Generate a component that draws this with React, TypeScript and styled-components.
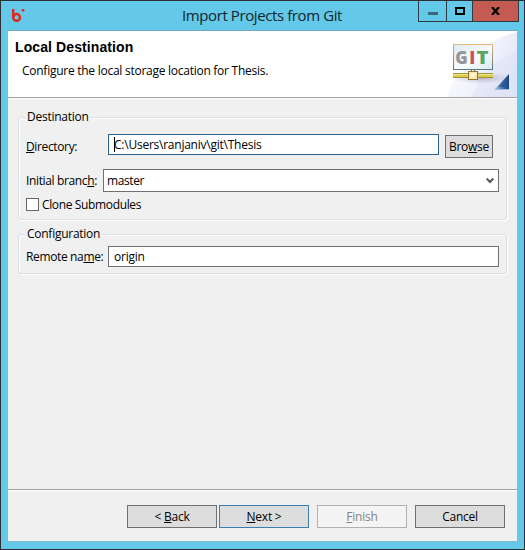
import React from "react";
import styled, { createGlobalStyle, css } from "styled-components";

const GlobalStyle = createGlobalStyle`
  * { box-sizing: border-box; }
  html, body { margin: 0; padding: 0; overflow: hidden; }
`;

const Window = styled.main`
  width: 525px;
  height: 550px;
  display: flex;
  flex-direction: column;
  border: 1px solid #2c3036;
  padding: 0 7px 7px;
  background: #64c8e8;
  font: 12px/16px "Open Sans", "Noto Sans", sans-serif;
  color: #000;
  cursor: default;
`;

const TitleBar = styled.header`
  height: 30px;
  flex: none;
  display: flex;
  align-items: flex-start;
  border-bottom: 1px solid #6fa9be;
`;

const AppLogo = styled.svg`
  width: 16px;
  height: 16px;
  flex: none;
  margin: 6px 0 0 2px;
`;

const WindowTitle = styled.h1`
  margin: 4px 0 0 156px;
  flex: 1;
  min-width: 0;
  font-size: 15px;
  line-height: 21px;
  font-weight: 400;
  letter-spacing: -0.4px;
  white-space: nowrap;
  color: #10252c;
`;

const Caption = styled.div`
  display: flex;
  flex: none;
  height: 21px;
  margin-right: -2px;
  border: solid #2c3a42;
  border-width: 0 1px 1px;
`;

const CaptionButton = styled.button<{ $width: number; $close?: boolean }>`
  width: ${(p) => p.$width}px;
  padding: 0;
  border: 0;
  display: flex;
  justify-content: center;
  align-items: center;
  background: ${(p) => (p.$close ? "#c35b52" : "transparent")};
  & + & { border-left: 1px solid #2c3a42; }
`;

const Client = styled.div`
  flex: 1;
  min-height: 0;
  display: flex;
  flex-direction: column;
  background: #f0f0f0;
  border-bottom: 1px solid #86bccb;
`;

const Banner = styled.section`
  height: 66px;
  flex: none;
  display: flex;
  justify-content: space-between;
  background: #fff;
`;

const BannerText = styled.div`
  padding: 8px 0 0 7px;
`;

const BannerTitle = styled.h2`
  margin: 0;
  font: bold 14px/17px "Liberation Sans", Arial, sans-serif;
  letter-spacing: 0.1px;
`;

const BannerDescription = styled.p`
  margin: 7px 0 0 7px;
  white-space: nowrap;
  letter-spacing: -0.26px;
`;

const GitArt = styled.svg`
  width: 75px;
  height: 66px;
`;

const Separator = styled.div`
  height: 2px;
  flex: none;
  background: #fff;
  border-top: 1px solid #a0a0a0;
`;

const Page = styled.div`
  flex: 1;
  padding: 10px 10px 0;
`;

const Group = styled.fieldset<{ $height: number }>`
  height: ${(p) => p.$height}px;
  min-width: 0;
  margin: 0 0 6px;
  padding: 0 7px;
  border: 1px solid #d5dfe5;
  border-radius: 3px;
  box-shadow: 1px 1px 0 #fff, inset 1px 1px 0 #fff;
`;

const Legend = styled.legend`
  height: 16px;
  padding: 0 2px;
  margin-left: -1px;
  background: #f0f0f0;
  letter-spacing: -0.26px;
`;

const Row = styled.div<{ $top: number; $height: number }>`
  display: flex;
  align-items: center;
  height: ${(p) => p.$height}px;
  margin-top: ${(p) => p.$top}px;
`;

const Label = styled.label<{ $width: number; $drop?: number }>`
  width: ${(p) => p.$width}px;
  padding-top: ${(p) => p.$drop ?? 0}px;
  flex: none;
  white-space: nowrap;
  letter-spacing: -0.36px;
`;

const Mnemonic = styled.span`
  text-decoration: underline;
  text-decoration-thickness: 1px;
  text-underline-offset: 1px;
  text-decoration-skip-ink: none;
`;

const Field = styled.div<{ $width: number; $focused?: boolean; $combo?: boolean }>`
  width: ${(p) => p.$width}px;
  height: ${(p) => (p.$combo ? 23 : 21)}px;
  display: flex;
  align-items: center;
  padding: 0 4px 0 ${(p) => (p.$combo ? 3 : 5)}px;
  border: 1px solid ${(p) => (p.$focused ? "#2b6390" : "#707070")};
  background: #fff;
  letter-spacing: -0.24px;
  ${(p) => p.$focused && css`align-self: flex-start; margin-top: 1px;`}
  ${(p) => p.$combo && css`
    justify-content: space-between;
    padding-top: 1px;
    letter-spacing: -0.4px;
  `}
`;

const Caret = styled.i`
  width: 1px;
  height: 15px;
  margin-right: -1px;
  background: #000;
`;

const CheckBox = styled.span`
  width: 13px;
  height: 13px;
  margin-right: 3px;
  border: 1px solid #666;
  background: #fff;
`;

const Button = styled.button<{ $width: number; $default?: boolean }>`
  width: ${(p) => p.$width}px;
  height: 23px;
  padding: 1px 0 0;
  flex: none;
  font: inherit;
  letter-spacing: -0.24px;
  color: #000;
  background: #dddddd;
  border: 1px solid ${(p) => (p.$default ? "#3c7fb1" : "#707070")};
  &:disabled {
    color: #838383;
    background: #f4f4f4;
    border-color: #adb2b5;
  }
`;

const BrowseButton = styled(Button)`
  align-self: flex-end;
  margin-left: 6px;
`;

const Footer = styled.footer`
  height: 50px;
  flex: none;
  display: flex;
  padding: 14px 12px 0 119px;
`;

const StepButtons = styled.div`
  display: flex;
  gap: 2px;
`;

const EndButtons = styled.div`
  display: flex;
  gap: 8px;
  margin-left: 8px;
`;

const BannerGraphic = () => (
  <GitArt viewBox="0 0 75 66" aria-hidden="true">
    <defs>
      <linearGradient id="swoosh" x1="0" y1="0" x2="1" y2="0.5">
        <stop offset="0" stopColor="#fff" />
        <stop offset="0.5" stopColor="#f5f6fd" />
        <stop offset="1" stopColor="#e2e6f8" />
      </linearGradient>
      <linearGradient id="panel" x1="0" y1="0" x2="1" y2="1">
        <stop offset="0" stopColor="#dceaf2" />
        <stop offset="0.55" stopColor="#f9fbfc" />
        <stop offset="1" stopColor="#d7e8ef" />
      </linearGradient>
      <linearGradient id="frame" x1="0" y1="0" x2="0" y2="1">
        <stop offset="0" stopColor="#e6b77c" />
        <stop offset="1" stopColor="#54757d" />
      </linearGradient>
      <linearGradient id="corner" x1="0" y1="0" x2="1" y2="0">
        <stop offset="0" stopColor="#b3d5ee" />
        <stop offset="0.55" stopColor="#4777ae" />
        <stop offset="1" stopColor="#174380" />
      </linearGradient>
      <radialGradient id="shade">
        <stop offset="0" stopColor="#a997b8" stopOpacity="0.75" />
        <stop offset="1" stopColor="#c4bdd5" stopOpacity="0" />
      </radialGradient>
    </defs>
    <path d="M5 66Q23 15 75 1V66Z" fill="url(#swoosh)" />
    <path d="M30 66Q42 30 75 21V66Z" fill="#dce1f6" opacity=".4" />
    <ellipse cx="40" cy="47" rx="31" ry="6" fill="url(#shade)" />
    <g transform="translate(1 0)">
      <rect x="10.5" y="13.5" width="39" height="25" fill="url(#panel)" stroke="url(#frame)" />
      <path d="M11 38.5H50" stroke="#587c83" />
      <g fontFamily="Open Sans" fontSize="17.5" fontWeight="800">
        <text x="12.3" y="32.7" fill="#969696" textLength="12.5" lengthAdjust="spacingAndGlyphs">G</text>
        <text x="26.3" y="32.7" fill="#c5535b" textLength="6" lengthAdjust="spacingAndGlyphs">I</text>
        <text x="33.5" y="32.7" fill="#57a866" textLength="12" lengthAdjust="spacingAndGlyphs">T</text>
      </g>
      <path d="M28.5 39V43M31.5 39V43" stroke="#78701c" />
      <path d="M10 42.5H50M10 46.5H50" stroke="#a1962d" />
      <path d="M10 43.5H50" stroke="#ece796" />
      <path d="M10 44.5H50M10 45.5H50" stroke="#d8cd50" />
      <rect x="25.5" y="40.5" width="9" height="8" fill="#ffe7aa" stroke="#8e7936" />
      <rect x="28" y="42" width="4" height="4" fill="#fff6d6" />
    </g>
    <path d="M67 43V59H52Z" fill="url(#corner)" />
    <path d="M64 48V56H56Z" fill="#254e89" opacity=".65" />
    <path d="M53 58.5H67" stroke="#9ebddc" />
  </GitArt>
);

export default function App() {
  return (
    <>
      <GlobalStyle />
      <Window>
        <TitleBar>
          <AppLogo viewBox="0 0 16 16" aria-hidden="true">
            <path d="M3.2 2V10.4" fill="none" stroke="#e1261c" strokeWidth="2.4" />
            <circle cx="6.6" cy="10.4" r="3.4" fill="none" stroke="#e1261c" strokeWidth="2.4" />
            <circle cx="13" cy="3.3" r="1.4" fill="#e1261c" />
          </AppLogo>
          <WindowTitle>Import Projects from Git</WindowTitle>
          <Caption>
            <CaptionButton $width={27} aria-label="Minimize">
              <svg width="10" height="10"><path d="M0 6H10V9H0Z" fill="#3d6876" /></svg>
            </CaptionButton>
            <CaptionButton $width={26} aria-label="Maximize">
              <svg width="10" height="8"><path d="M1 1H9V7H1Z" fill="none" stroke="#000" strokeWidth="2" /></svg>
            </CaptionButton>
            <CaptionButton $width={46} $close aria-label="Close">
              <svg width="9" height="8"><path d="M1 0L8 8M8 0L1 8" stroke="#000" strokeWidth="2.2" /></svg>
            </CaptionButton>
          </Caption>
        </TitleBar>
        <Client>
          <Banner>
            <BannerText>
              <BannerTitle>Local Destination</BannerTitle>
              <BannerDescription>Configure the local storage location for Thesis.</BannerDescription>
            </BannerText>
            <BannerGraphic />
          </Banner>
          <Separator />
          <Page>
            <Group $height={111}>
              <Legend>Destination</Legend>
              <Row $top={8} $height={25}>
                <Label $width={82} $drop={3}><Mnemonic>D</Mnemonic>irectory:</Label>
                <Field $width={331} $focused><Caret />C:\Users\ranjaniv\git\Thesis</Field>
                <BrowseButton $width={48}>Bro<Mnemonic>w</Mnemonic>se</BrowseButton>
              </Row>
              <Row $top={11} $height={23}>
                <Label $width={77} $drop={1}>Initial branc<Mnemonic>h</Mnemonic>:</Label>
                <Field $width={396} $combo>
                  master
                  <svg width="8" height="6"><path d="M.7 .5L4 4L7.3 .5" fill="none" stroke="#555" strokeWidth="2" /></svg>
                </Field>
              </Row>
              <Row $top={5} $height={15}>
                <CheckBox />
                <Label $width={110} $drop={1}>Clone Submodules</Label>
              </Row>
            </Group>
            <Group $height={48}>
              <Legend>Configuration</Legend>
              <Row $top={4} $height={21}>
                <Label $width={82} $drop={1}>Remote na<Mnemonic>m</Mnemonic>e:</Label>
                <Field $width={391}>origin</Field>
              </Row>
            </Group>
          </Page>
          <Separator />
          <Footer>
            <StepButtons>
              <Button $width={90}>&lt; <Mnemonic>B</Mnemonic>ack</Button>
              <Button $width={90} $default><Mnemonic>N</Mnemonic>ext &gt;</Button>
            </StepButtons>
            <EndButtons>
              <Button $width={90} disabled><Mnemonic>F</Mnemonic>inish</Button>
              <Button $width={90}>Cancel</Button>
            </EndButtons>
          </Footer>
        </Client>
      </Window>
    </>
  );
}
